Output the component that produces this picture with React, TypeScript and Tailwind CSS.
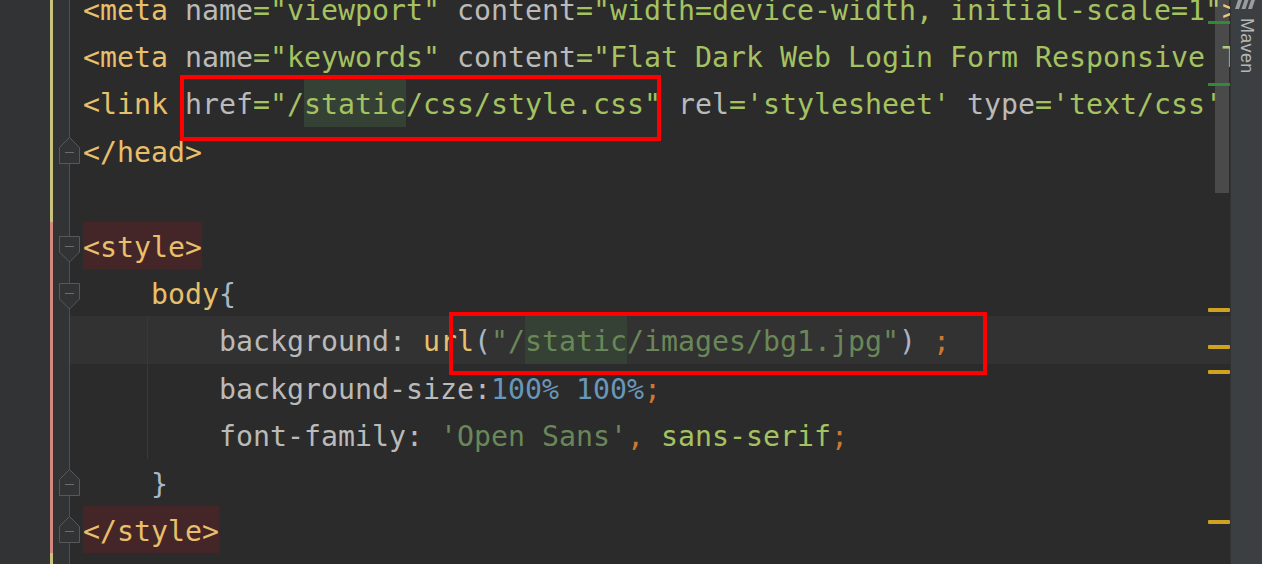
import React from "react";

type Fold = "start" | "end" | null;

const T = ({ children }: { children: React.ReactNode }) => <span className="text-[#e8bf6a]">{children}</span>;
const A = ({ children }: { children: React.ReactNode }) => <span className="text-[#bababa]">{children}</span>;
const V = ({ children }: { children: React.ReactNode }) => <span className="text-[#a5c261]">{children}</span>;
const S = ({ children }: { children: React.ReactNode }) => <span className="text-[#6a8759]">{children}</span>;
const O = ({ children }: { children: React.ReactNode }) => <span className="text-[#cc7832]">{children}</span>;
const N = ({ children }: { children: React.ReactNode }) => <span className="text-[#6897bb]">{children}</span>;
// full-row-height highlights (usage highlight and matched tag)
const Hl = ({ children }: { children: React.ReactNode }) => (
  <span className="inline-block h-[47.4px] bg-[#344134] align-top">{children}</span>
);
const TagBg = ({ children }: { children: React.ReactNode }) => (
  <span className="inline-block h-[47.4px] bg-[#442628] align-top">{children}</span>
);

function FoldMarker({ kind }: { kind: "start" | "end" }) {
  if (kind === "end") {
    return (
      <svg className="absolute left-[58px] top-[10px]" width="23" height="28" viewBox="0 0 23 28">
        <polygon points="11.5,0.5 1.5,10.5 1.5,26.5 21.5,26.5 21.5,10.5" fill="#313335" stroke="#56585a" strokeWidth="1" />
        <line x1="7" y1="15.5" x2="16" y2="15.5" stroke="#6a6c6e" strokeWidth="1" />
      </svg>
    );
  }
  return (
    <svg className="absolute left-[58px] top-[14px]" width="23" height="28" viewBox="0 0 23 28">
      <polygon points="1.5,0.5 21.5,0.5 21.5,16 11.5,26 1.5,16" fill="#313335" stroke="#56585a" strokeWidth="1" />
      <line x1="7" y1="10.5" x2="16" y2="10.5" stroke="#6a6c6e" strokeWidth="1" />
    </svg>
  );
}

function Row({
  change,
  fold = null,
  current = false,
  guide = false,
  children,
}: {
  change: "add" | "mod";
  fold?: Fold;
  current?: boolean;
  guide?: boolean;
  children?: React.ReactNode;
}) {
  return (
    <div className="relative flex h-[47.4px] shrink-0">
      <div className="flex w-[69px] shrink-0 bg-[#313335] pl-[50px]">
        <div className={change === "add" ? "h-full w-[3px] bg-[#c9c27c]" : "h-full w-[3px] bg-[#d4877f]"} />
      </div>
      <div className="w-px shrink-0 bg-[#4e5052]" />
      <div
        className={
          "relative flex-1 whitespace-pre pl-[13px] leading-[52px] text-[#a9b7c6] " +
          (current ? "bg-[#323232]" : "")
        }
      >
        {guide && <div className="absolute left-[77px] top-0 h-full w-px bg-[#393939]" />}
        {children}
      </div>
      {fold && <FoldMarker kind={fold} />}
    </div>
  );
}

export default function App() {
  return (
    <div className="flex h-[564px] w-[1262px] overflow-hidden bg-[#2b2b2b] font-['DejaVu_Sans_Mono',monospace] text-[28.24px]">
      <div className="relative w-[1230px] shrink-0 overflow-hidden">
        <div className="mt-[-15.3px] flex flex-col">
          <Row change="add">
            <T>&lt;meta</T> <A>name</A><V>="viewport"</V> <A>content</A><V>="width=device-width, initial-scale=1"</V><T>&gt;</T>
          </Row>
          <Row change="add">
            <T>&lt;meta</T> <A>name</A><V>="keywords"</V> <A>content</A><V>="Flat Dark Web Login Form Responsive Templates"</V><T>&gt;</T>
          </Row>
          <Row change="add">
            <T>&lt;link</T> <A>href</A><V>="/</V><Hl><V>static</V></Hl><V>/css/style.css"</V> <A>rel</A><V>='stylesheet'</V> <A>type</A><V>='text/css'</V> <T>/&gt;</T>
          </Row>
          <Row change="add" fold="end">
            <T>&lt;/head&gt;</T>
          </Row>
          <Row change="add" />
          <Row change="mod" fold="start">
            <TagBg><T>&lt;style&gt;</T></TagBg>
          </Row>
          <Row change="mod" fold="start">
            {"    "}<T>body</T>{"{"}
          </Row>
          <Row change="mod" current guide>
            {"        "}<A>background: </A><T>url</T>(<S>"/</S><Hl><S>static</S></Hl><S>/images/bg1.jpg"</S>) <O>;</O>
          </Row>
          <Row change="mod" guide>
            {"        "}<A>background-size:</A><N>100% 100%</N><O>;</O>
          </Row>
          <Row change="mod" guide>
            {"        "}<A>font-family: </A><S>'Open Sans'</S><O>, </O><V>sans-serif</V><O>;</O>
          </Row>
          <Row change="mod" fold="end">
            {"    }"}
          </Row>
          <Row change="mod" fold="end">
            <TagBg><T>&lt;/style&gt;</T></TagBg>
          </Row>
          <Row change="add" />
        </div>

        {/* scrollbar thumb and error stripe markers */}
        <div className="absolute left-[1215px] top-0 h-[193px] w-[14px] bg-white/15" />
        <div className="absolute left-[1208px] top-[21px] h-[3px] w-[22px] bg-[#318a36]" />
        <div className="absolute left-[1208px] top-[83px] h-[3px] w-[22px] bg-[#318a36]" />
        <div className="absolute left-[1208px] top-[308px] h-[4px] w-[22px] rounded-[1px] bg-[#cfa21f]" />
        <div className="absolute left-[1208px] top-[345px] h-[4px] w-[22px] rounded-[1px] bg-[#cfa21f]" />
        <div className="absolute left-[1208px] top-[370px] h-[4px] w-[22px] rounded-[1px] bg-[#cfa21f]" />
        <div className="absolute left-[1208px] top-[520px] h-[4px] w-[22px] rounded-[1px] bg-[#cfa21f]" />

        {/* red annotation boxes */}
        <div className="absolute left-[180px] top-[75px] h-[66px] w-[481px] border-4 border-[#ff0000]" />
        <div className="absolute left-[449px] top-[312px] h-[63px] w-[538px] border-4 border-[#ff0000]" />
      </div>

      <div className="flex w-[32px] shrink-0 flex-col items-center border-l border-[#323232] bg-[#3c3f41]">
        <svg width="22" height="10" viewBox="0 0 22 10" className="ml-[-3px]">
          <polygon points="1,9 5,9 8,0 4,0" fill="#9a9da0" />
          <polygon points="7.5,9 11.5,9 14.5,0 10.5,0" fill="#9a9da0" />
          <polygon points="14,9 18,9 21,0 17,0" fill="#9a9da0" />
        </svg>
        <div className="mt-[8px] font-['Liberation_Sans',sans-serif] text-[18px] leading-none tracking-[0.3px] text-[#b4b6b8] [writing-mode:vertical-rl]">
          Maven
        </div>
      </div>
    </div>
  );
}
